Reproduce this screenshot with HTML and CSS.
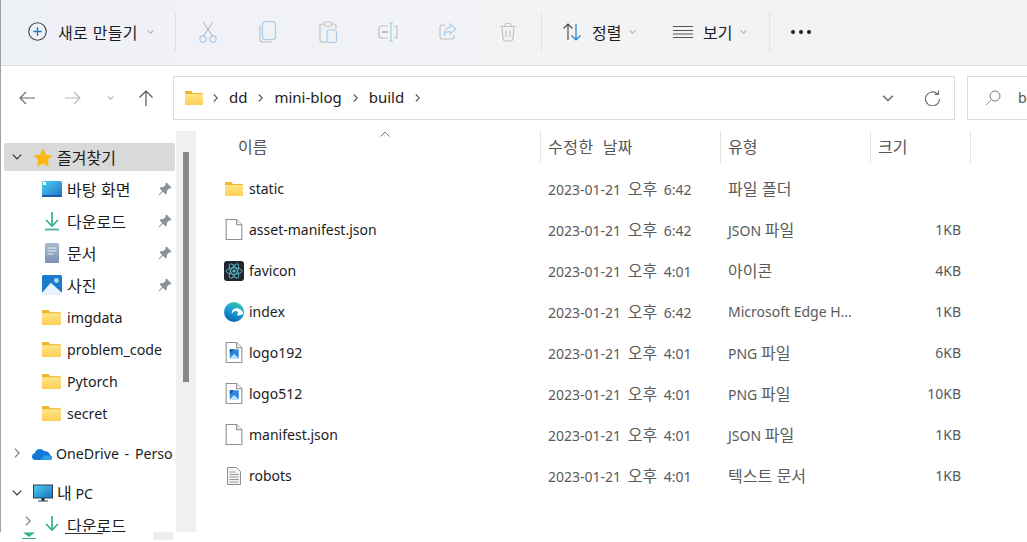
FILE: index.html
```html
<!DOCTYPE html>
<html lang="ko">
<head>
<meta charset="utf-8">
<title>build</title>
<link rel="stylesheet" href="styles.css">
</head>
<body>
<svg class="sprite" aria-hidden="true">
  <defs>
    <linearGradient id="fg" x1="0" y1="0" x2="0" y2="1"><stop offset="0" stop-color="#ffe68a"/><stop offset="1" stop-color="#fbcf55"/></linearGradient>
    <linearGradient id="doc" x1="0" y1="0" x2="0" y2="1"><stop offset="0" stop-color="#a9b9d0"/><stop offset="1" stop-color="#7d93b3"/></linearGradient>
    <linearGradient id="desk" x1="0" y1="0" x2="1" y2="1"><stop offset="0" stop-color="#4fd0ee"/><stop offset="1" stop-color="#1a72c8"/></linearGradient>
    <linearGradient id="edge" x1=".7" y1="0" x2=".3" y2="1"><stop offset="0" stop-color="#3cc9a0"/><stop offset=".45" stop-color="#1c9fd8"/><stop offset="1" stop-color="#0c5fb0"/></linearGradient>
    <symbol id="folder" viewBox="0 0 18 14"><path d="M0 1q0-1 1-1h5l2 2h9q1 0 1 1v10q0 1-1 1H1q-1 0-1-1z" fill="#f0b429"/><path d="M0 3h18v10q0 1-1 1H1q-1 0-1-1z" fill="url(#fg)"/></symbol>
    <symbol id="file" viewBox="0 0 16 20"><path d="M.5.5h10l5 5v14H.5z" fill="#fff" stroke="#8f8f8f"/><path d="M10.5.5v5h5" fill="#f2f2f2" stroke="#8f8f8f"/></symbol>
    <symbol id="png" viewBox="0 0 16 20"><path d="M.5.5h10l5 5v14H.5z" fill="#fff" stroke="#8f8f8f"/><path d="M10.5.5v5h5" fill="#f2f2f2" stroke="#8f8f8f"/><rect x="4" y="7" width="8.500" height="8.500" fill="#2c86dc"/><path d="M4 15.500l4-4 4.500 4z" fill="#bfe3fb"/><path d="M4 7h4l-4 4z" fill="#11509a"/></symbol>
    <symbol id="txt" viewBox="0 0 14 18"><path d="M.5.500h9l4 4v13H.5z" fill="#f4f4f4" stroke="#8f8f8f"/><path d="M2.500 5h6M2.500 7.500h9M2.500 10h9M2.500 12.500h9M2.500 15h9" stroke="#9a9a9a"/></symbol>
    <symbol id="pin" viewBox="0 0 14 14"><path d="M8.500.5l5 5-1 1-1-.3L9 8.700l-.3 2.800-1 1L5 9.800 1 13.500.5 13l3.700-4L1.500 6.300l1-1 2.800-.3 2.500-2.500-.3-1z" fill="#8d9299"/></symbol>
    <symbol id="chev" viewBox="0 0 8 5"><path d="M.5.500L4 4 7.500.500" fill="none" stroke="currentColor"/></symbol>
    <symbol id="chevr" viewBox="0 0 5 8"><path d="M.8.500L4.300 4 .8 7.500" fill="none" stroke="currentColor" stroke-width="1.100"/></symbol>
  </defs>
</svg>

<div class="window">
  <header class="toolbar">
    <button class="tb-new">
      <svg class="i18" viewBox="0 0 18 18"><circle cx="9" cy="9" r="8.300" fill="none" stroke="#444" stroke-width="1.100"/><path d="M9 5v8M5 9h8" stroke="#1878c8" stroke-width="1.300"/></svg>
      <span class="ko tb-label">새로 만들기</span>
      <svg class="chev-s"><use href="#chev"/></svg>
    </button>
    <i class="tb-sep"></i>
    <div class="tb-icons">
      <button class="tb-icon"><svg viewBox="0 0 20 22" class="i22"><path d="M5 1l9.500 14M15 1L5.500 15" stroke="#bcbcbc" fill="none" stroke-width="1.100"/><circle cx="5" cy="18" r="3.200" fill="none" stroke="#a9cdea" stroke-width="1.200"/><circle cx="15" cy="18" r="3.200" fill="none" stroke="#a9cdea" stroke-width="1.200"/></svg></button>
      <button class="tb-icon"><svg viewBox="0 0 18 22" class="i22"><rect x="3.500" y=".6" width="13" height="18" rx="3" fill="none" stroke="#a9cdea" stroke-width="1.200"/><path d="M1 4v14q0 3 3 3h9" fill="none" stroke="#c2c2c2" stroke-width="1.200"/></svg></button>
      <button class="tb-icon"><svg viewBox="0 0 18 22" class="i22"><path d="M5 3H3q-2 0-2 2v14q0 2 2 2h5M13 3h2q2 0 2 2v3" fill="none" stroke="#c2c2c2" stroke-width="1.200"/><rect x="5" y="1" width="8" height="4" rx="1.500" fill="none" stroke="#c2c2c2" stroke-width="1.100"/><rect x="8" y="9" width="9.500" height="12.400" rx="2" fill="none" stroke="#a9cdea" stroke-width="1.200"/></svg></button>
      <button class="tb-icon"><svg viewBox="0 0 20 20" class="i20"><path d="M10 4H3q-2 0-2 2v8q0 2 2 2h7M16 4h1q2 0 2 2v8q0 2-2 2h-1" fill="none" stroke="#c2c2c2" stroke-width="1.200"/><path d="M4 10h6" stroke="#9fa8b0" stroke-width="1.400"/><path d="M13 1v18M11 1h4M11 19h4" stroke="#a9cdea" fill="none" stroke-width="1.200"/></svg></button>
      <button class="tb-icon"><svg viewBox="0 0 20 20" class="i20"><path d="M7 3H4Q2 3 2 5v10q0 2 2 2h10q2 0 2-2v-2" fill="none" stroke="#c2c2c2" stroke-width="1.200"/><path d="M12 2l6 5-6 5V9.500Q7 9.500 6 14 6 6.500 12 5z" fill="none" stroke="#a9cdea" stroke-width="1.200"/></svg></button>
      <button class="tb-icon"><svg viewBox="0 0 18 20" class="i20"><path d="M1 4.500h16M6 4.500V3q0-1.500 1.500-1.500h3Q12 1.500 12 3v1.500M3 4.500l1 12q.2 2.500 2.500 2.500h5q2.300 0 2.500-2.500l1-12M7 8.500v6.500M11 8.500v6.500" fill="none" stroke="#c2c2c2" stroke-width="1.200"/></svg></button>
    </div>
    <i class="tb-sep"></i>
    <button class="tb-text tb-sort">
      <svg viewBox="0 0 20 18" class="sort-ic"><path d="M6 17V1M1.500 5.500L6 1l4.500 4.500" fill="none" stroke="#444" stroke-width="1.100"/><path d="M14 1v16M9.500 12.500L14 17l4.500-4.500" fill="none" stroke="#1f7fd0" stroke-width="1.200"/></svg>
      <span class="ko">정렬</span>
      <svg class="chev-s"><use href="#chev"/></svg>
    </button>
    <button class="tb-text tb-view">
      <svg viewBox="0 0 20 12" class="view-ic"><path d="M0 .5h20M0 4.500h20M0 8h20M0 11.500h20" stroke="#555" stroke-width="1"/></svg>
      <span class="ko">보기</span>
      <svg class="chev-s"><use href="#chev"/></svg>
    </button>
    <i class="tb-sep"></i>
    <button class="tb-more"><b></b><b></b><b></b></button>
  </header>

  <nav class="navbar">
    <div class="nav-btns">
      <svg viewBox="0 0 16 14" class="nav-ic"><path d="M16 7H1M7 1L1 7l6 6" fill="none" stroke="#666" stroke-width="1.100"/></svg>
      <svg viewBox="0 0 16 14" class="nav-ic nav-fwd"><path d="M0 7h15M9 1l6 6-6 6" fill="none" stroke="#b9b9b9" stroke-width="1.100"/></svg>
      <svg class="chev-s nav-down"><use href="#chev"/></svg>
      <svg viewBox="0 0 16 16" class="nav-up"><path d="M8 16V1M1.500 7.500L8 1l6.500 6.500" fill="none" stroke="#555" stroke-width="1.200"/></svg>
    </div>
    <div class="address">
      <svg class="addr-folder"><use href="#folder"/></svg>
      <svg class="crumb-sep"><use href="#chevr"/></svg><span class="crumb">dd</span>
      <svg class="crumb-sep"><use href="#chevr"/></svg><span class="crumb">mini-blog</span>
      <svg class="crumb-sep"><use href="#chevr"/></svg><span class="crumb">build</span>
      <svg class="crumb-sep"><use href="#chevr"/></svg>
      <svg class="addr-down"><use href="#chev"/></svg>
      <svg viewBox="0 0 16 16" class="addr-refresh"><path d="M13.500 4A7 7 0 1 0 15.500 9" fill="none" stroke="#666" stroke-width="1.100"/><path d="M14.500 .5V4.500H10.500" fill="none" stroke="#666" stroke-width="1.100"/></svg>
    </div>
    <div class="search">
      <svg viewBox="0 0 16 16" class="search-ic"><circle cx="10" cy="6" r="5" fill="none" stroke="#777"/><path d="M6.500 9.500L1 15" stroke="#999"/></svg>
      <span>b</span>
    </div>
  </nav>

  <div class="content">
    <aside class="sidebar">
      <div class="tree">
        <div class="t-row t-top t-selected">
          <svg class="t-exp"><use href="#chev"/></svg>
          <svg viewBox="0 0 20 19" class="t-ic20"><path d="M10 .5l3 6.200 6.500.9-4.800 4.500 1.200 6.600L10 15.500 4.100 18.700l1.200-6.600L.5 7.600 7 6.700z" fill="#fcb713"/></svg>
          <span class="ko">즐겨찾기</span>
        </div>
        <div class="t-row t-sub">
          <svg viewBox="0 0 20 16" class="t-ic"><rect width="20" height="16" rx="1.500" fill="url(#desk)"/><path d="M1 1h3v3H1z" fill="#fff"/><path d="M0 14h20v2H0z" fill="#155da8"/></svg>
          <span class="ko">바탕 화면</span><svg class="pin"><use href="#pin"/></svg>
        </div>
        <div class="t-row t-sub">
          <svg viewBox="0 0 20 20" class="t-ic"><path d="M10 1v13M4 9l6 6 6-6" fill="none" stroke="#36b08f" stroke-width="1.700"/><path d="M3 18.500h14" stroke="#3cb3a0" stroke-width="1.700"/></svg>
          <span class="ko">다운로드</span><svg class="pin"><use href="#pin"/></svg>
        </div>
        <div class="t-row t-sub">
          <svg viewBox="0 0 20 20" class="t-ic"><rect x="3" width="14" height="20" rx="1.500" fill="url(#doc)"/><path d="M5.500 5h9M5.500 8h9M5.500 11h6" stroke="#eef2f8" stroke-width="1.200"/></svg>
          <span class="ko">문서</span><svg class="pin"><use href="#pin"/></svg>
        </div>
        <div class="t-row t-sub">
          <svg viewBox="0 0 18 18" class="t-ic"><rect width="18" height="18" rx="1.500" fill="#1a7bd0"/><circle cx="13" cy="5" r="2.200" fill="#a7dcf8"/><path d="M0 16l8-9 10 9v2H0z" fill="#e6f3fc"/></svg>
          <span class="ko">사진</span><svg class="pin"><use href="#pin"/></svg>
        </div>
        <div class="t-row t-sub"><svg class="t-ic t-fld"><use href="#folder"/></svg><span class="t-lat">imgdata</span></div>
        <div class="t-row t-sub"><svg class="t-ic t-fld"><use href="#folder"/></svg><span class="t-lat">problem_code</span></div>
        <div class="t-row t-sub"><svg class="t-ic t-fld"><use href="#folder"/></svg><span class="t-lat">Pytorch</span></div>
        <div class="t-row t-sub"><svg class="t-ic t-fld"><use href="#folder"/></svg><span class="t-lat">secret</span></div>
        <div class="t-row t-top t-gap">
          <svg class="t-exp t-closed"><use href="#chevr"/></svg>
          <svg viewBox="0 0 20 13" class="t-ic20"><path d="M4 13q-4 0-4-3.500Q0 6.500 3 6q1-4 5-4 2.500 0 4 2 5 0 6 4 2 .5 2 2.500 0 2.500-3 2.500z" fill="#1479d4"/><path d="M8 13l5-5 5 1q2 .5 2 1.500 0 2.500-3 2.500z" fill="#2c9de6"/></svg>
          <span class="t-lat t-wide">OneDrive - Perso</span>
        </div>
        <div class="t-row t-top t-gap">
          <svg class="t-exp"><use href="#chev"/></svg>
          <svg viewBox="0 0 20 18" class="t-ic20"><rect x=".5" y=".5" width="19" height="13" fill="url(#desk)" stroke="#2a3f55"/><path d="M9 14h2v2H9zM5 16.500h10" stroke="#2a3f55" stroke-width="1.200"/></svg>
          <span><span class="ko">내</span> PC</span>
        </div>
        <div class="t-row t-dl">
          <svg class="t-exp t-closed t-dl-exp"><use href="#chevr"/></svg>
          <svg viewBox="0 0 20 20" class="t-ic"><path d="M10 1v13M4 9l6 6 6-6" fill="none" stroke="#36b08f" stroke-width="1.700"/></svg>
          <span class="ko">다운로드</span>
        </div>
      </div>
      <div class="scrollbar"><div class="thumb"></div></div>
    </aside>

    <main class="files">
      <div class="f-head">
        <div class="c-name h-cell"><span class="ko">이름</span><svg class="sort-caret" viewBox="0 0 10 6"><path d="M.5 5.500L5 1l4.500 4.500" fill="none" stroke="#777"/></svg></div>
        <div class="c-date h-cell"><span class="ko h-wide">수정한 날짜</span></div>
        <div class="c-type h-cell"><span class="ko">유형</span></div>
        <div class="c-size h-cell"><span class="ko">크기</span></div>
      </div>
      <div class="f-list">
        <div class="f-row"><div class="c-name"><svg class="f-ic f-fld"><use href="#folder"/></svg><span>static</span></div><div class="c-date">2023-01-21 <span class="ko">오후</span> 6:42</div><div class="c-type"><span class="ko">파일 폴더</span></div><div class="c-size r"></div></div>
        <div class="f-row"><div class="c-name"><svg class="f-ic f-doc"><use href="#file"/></svg><span>asset-manifest.json</span></div><div class="c-date">2023-01-21 <span class="ko">오후</span> 6:42</div><div class="c-type">JSON <span class="ko">파일</span></div><div class="c-size r">1KB</div></div>
        <div class="f-row"><div class="c-name">
          <svg class="f-ic" viewBox="0 0 20 20"><rect width="20" height="20" rx="3" fill="#20262c"/><g fill="none" stroke="#61bcd2" stroke-width=".9"><ellipse cx="10" cy="10" rx="8" ry="3.200"/><ellipse cx="10" cy="10" rx="8" ry="3.200" transform="rotate(60 10 10)"/><ellipse cx="10" cy="10" rx="8" ry="3.200" transform="rotate(120 10 10)"/></g><circle cx="10" cy="10" r="1.600" fill="#61bcd2"/></svg>
          <span>favicon</span></div><div class="c-date">2023-01-21 <span class="ko">오후</span> 4:01</div><div class="c-type"><span class="ko">아이콘</span></div><div class="c-size r">4KB</div></div>
        <div class="f-row"><div class="c-name">
          <svg class="f-ic" viewBox="0 0 20 20"><circle cx="10" cy="10" r="10" fill="url(#edge)"/><path d="M8 12C7 8 10.500 5.500 14 6.500 17 7.300 19 9.500 19.300 11.500 17.500 13.500 14.500 13.800 12.500 13 14.500 12 14.500 9.500 12.500 9 10.500 8.500 8.500 10 8 12z" fill="#fff"/></svg>
          <span>index</span></div><div class="c-date">2023-01-21 <span class="ko">오후</span> 6:42</div><div class="c-type">Microsoft Edge H...</div><div class="c-size r">1KB</div></div>
        <div class="f-row"><div class="c-name"><svg class="f-ic f-doc"><use href="#png"/></svg><span>logo192</span></div><div class="c-date">2023-01-21 <span class="ko">오후</span> 4:01</div><div class="c-type">PNG <span class="ko">파일</span></div><div class="c-size r">6KB</div></div>
        <div class="f-row"><div class="c-name"><svg class="f-ic f-doc"><use href="#png"/></svg><span>logo512</span></div><div class="c-date">2023-01-21 <span class="ko">오후</span> 4:01</div><div class="c-type">PNG <span class="ko">파일</span></div><div class="c-size r">10KB</div></div>
        <div class="f-row"><div class="c-name"><svg class="f-ic f-doc"><use href="#file"/></svg><span>manifest.json</span></div><div class="c-date">2023-01-21 <span class="ko">오후</span> 4:01</div><div class="c-type">JSON <span class="ko">파일</span></div><div class="c-size r">1KB</div></div>
        <div class="f-row"><div class="c-name"><svg class="f-ic f-txt"><use href="#txt"/></svg><span>robots</span></div><div class="c-date">2023-01-21 <span class="ko">오후</span> 4:01</div><div class="c-type"><span class="ko">텍스트 문서</span></div><div class="c-size r">1KB</div></div>
      </div>
    </main>
  </div>

  <div class="ghost">
    <svg viewBox="0 0 14 7" class="ghost-ic"><path d="M1 .5L7 5l6-4.500z" fill="#36b08f"/><path d="M0 6.500h14" stroke="#36b08f"/></svg>
    <span class="ghost-line"></span>
    <span class="ghost-btn"></span>
  </div>
</div>
</body>
</html>
```

FILE: styles.css
```css
* { box-sizing: border-box; }
html, body { margin: 0; height: 100%; overflow: hidden; background: #fff; }
body { font-family: "Noto Sans", "Noto Sans CJK KR", sans-serif; font-size: 14px; line-height: 20px; color: #1c1c1c; }
button { all: unset; display: flex; align-items: center; }
.ko { font-family: "Noto Sans CJK KR", sans-serif; font-size: 16px; line-height: 20px; }
.sprite { position: absolute; width: 0; height: 0; }
.window { width: 1027px; height: 542px; display: flex; flex-direction: column; border-left: 1px solid #a3a3a3; position: relative; }

.toolbar { height: 66px; flex: none; display: flex; align-items: center; padding-bottom: 2px; border-bottom: 1px solid #dedede; background: linear-gradient(90deg, #eff1f8, #f3f3f5 55%, #f2f2f3); }
.tb-new { margin-left: 27px; width: 147px; gap: 11px; }
.tb-label { letter-spacing: .3px; }
.i18 { width: 19px; height: 19px; flex: none; }
.chev-s { width: 7px; height: 4px; color: #777; flex: none; }
.tb-new .chev-s { margin-left: -2px; }
.tb-sep { width: 1px; height: 40px; background: #dfe1e6; flex: none; }
.tb-icons { display: flex; margin-left: 2px; margin-right: 3px; }
.tb-icon { width: 60px; justify-content: center; height: 40px; }
.i22 { height: 22px; width: 22px; }
.i20 { height: 20px; width: 20px; }
.tb-text { gap: 10px; }
.tb-text .chev-s { margin-left: -2px; }
.tb-sort { margin-left: 20px; width: 111px; }
.sort-ic { width: 20px; height: 18px; flex: none; }
.tb-view { width: 96px; }
.view-ic { width: 20px; height: 12px; flex: none; }
.tb-more { margin-left: 21px; gap: 4px; }
.tb-more b { width: 4px; height: 4px; border-radius: 50%; background: #222; display: block; }

.navbar { height: 65px; flex: none; display: flex; align-items: center; padding-bottom: 1px; }
.nav-btns { display: flex; align-items: center; width: 172px; padding-left: 18px; flex: none; }
.nav-ic { width: 16px; height: 14px; flex: none; }
.nav-fwd { margin-left: 30px; }
.nav-down { margin-left: 26px; color: #666; }
.nav-up { width: 16px; height: 16px; flex: none; margin-left: 24px; }
.address { width: 782px; height: 44px; border: 1px solid #dcdcdc; display: flex; align-items: center; padding-left: 11px; font-size: 15px; flex: none; }
.crumb { position: relative; top: -1px; }
.addr-folder { width: 18px; height: 14px; flex: none; margin-right: -1px; }
.crumb-sep { width: 5px; height: 8px; color: #555; flex: none; margin: 0 11px; }
.addr-down { width: 12px; height: 7px; color: #666; margin-left: auto; }
.addr-refresh { width: 16px; height: 16px; margin: 0 14px 0 30px; }
.search { margin-left: 12px; flex: none; width: 80px; height: 44px; border: 1px solid #dcdcdc; border-right: 0; display: flex; align-items: center; padding-left: 17px; gap: 17px; color: #555; }
.search-ic { width: 16px; height: 16px; }

.content { flex: 1; min-height: 0; display: flex; overflow: hidden; }
.sidebar { width: 196px; flex: none; display: flex; overflow: hidden; font-size: 14.2px; }
.tree { width: 175px; flex: none; padding-top: 10px; overflow: hidden; }
.scrollbar { width: 20px; flex: none; background: #f0f0f0; padding: 21px 0 0 7px; }
.thumb { width: 6px; height: 230px; background: #888; }

.t-row { height: 32px; display: flex; align-items: center; white-space: nowrap; }
.t-top { padding-left: 11px; }
.t-sub { padding-left: 41px; gap: 5px; position: relative; }
.t-selected { height: 28px; margin: 2px 0 2px 3px; padding-left: 8px; background: #d9d9d9; border-radius: 2px; width: 171px; }
.t-gap { margin-top: 8px; }
.t-lat { padding-top: 2px; }
.t-wide { word-spacing: 2px; }
.t-exp { width: 10px; height: 6px; color: #333; flex: none; margin-right: 11px; }
.t-closed { width: 6px; height: 10px; color: #888; margin: 0 12px 0 2px; }
.t-ic20 { width: 20px; height: 19px; flex: none; margin-right: 4px; }
.t-ic { width: 20px; height: 20px; flex: none; }
.t-fld { height: 15px; width: 19px; margin-right: 1px; }
.pin { width: 14px; height: 14px; position: absolute; left: 157px; top: 9px; }
.t-dl { padding-left: 24px; }
.t-dl-exp { margin: -8px 11px 0 0; }
.t-dl .t-ic { margin-right: 5px; }

.ghost { position: absolute; left: -1px; bottom: 0; width: 197px; height: 10px; background: #fff; overflow: hidden; }
.ghost-ic { position: absolute; left: 22px; top: 0; width: 14px; height: 7px; }
.ghost-line { position: absolute; left: 65px; top: 1px; width: 38px; height: 1px; background: #333; }
.ghost-btn { position: absolute; left: 153px; top: 0; width: 20px; height: 8px; background: #eee; }

.files { flex: 1; min-width: 0; }
.f-head { display: flex; height: 32px; color: #555; }
.h-cell { padding-top: 5px; border-right: 1px solid #e5e5e5; position: relative; }
.h-wide { word-spacing: 4px; letter-spacing: .5px; }
.c-name { width: 344px; padding-left: 41px; flex: none; }
.c-date { width: 180px; padding-left: 7px; flex: none; word-spacing: 3px; }
.c-type { width: 150px; padding-left: 7px; flex: none; }
.c-size { width: 100px; padding-left: 7px; flex: none; }
.sort-caret { position: absolute; left: 183px; top: 0; width: 10px; height: 6px; }
.f-list { padding-top: 5px; }
.f-row { height: 41px; display: flex; align-items: center; color: #5a5a5a; }
.f-row .c-name { display: flex; align-items: center; gap: 5px; padding-left: 27px; color: #1c1c1c; }
.f-ic { width: 20px; height: 20px; flex: none; }
.f-fld { width: 18px; height: 14px; margin: 0 1px; }
.f-doc { height: 21px; }
.f-txt { height: 18px; }
.r { text-align: right; padding: 0 10px 0 0; }
```
